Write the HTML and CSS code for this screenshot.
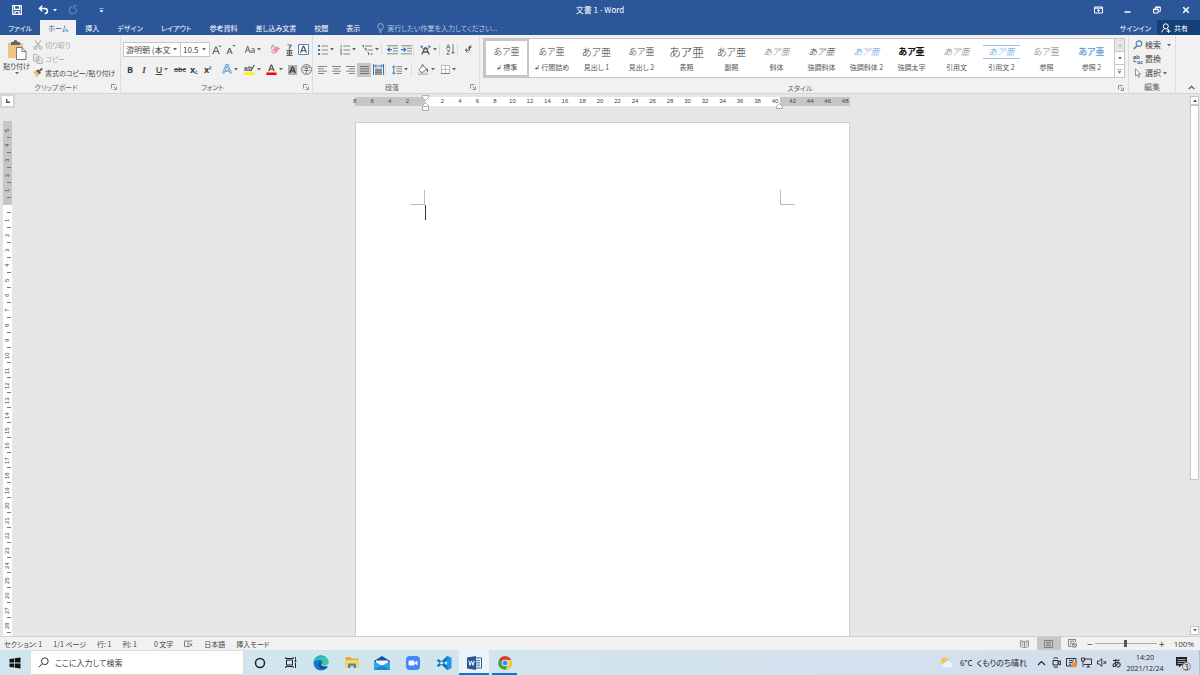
FILE: index.html
```html
<!DOCTYPE html>
<html lang="ja">
<head>
    <meta charset="UTF-8">
    <meta name="viewport" content="width=device-width, initial-scale=1.0">
    <title>文書 1 - Word</title>
    <link rel="stylesheet" href="styles.css">
</head>
<body>
    <svg class="sprite" aria-hidden="true">
        <symbol id="arrow" viewBox="0 0 4 3"><path d="M0 0h4L2 2.5z" fill="#666"/></symbol>
        <symbol id="launcher" viewBox="0 0 6 6"><path d="M.5 4.500V.5h4M2.500 2.500l2 2M5.500 2.500v3h-3" fill="none" stroke="#777" stroke-width=".8"/></symbol>
    </svg>

    <!-- タイトルバー -->
    <header class="titlebar">
        <div class="quick-access">
            <button class="qa-save" aria-label="上書き保存"><svg width="10" height="10" viewBox="0 0 10 10"><path d="M.7.7h8.600v8.600H.7zM2.500.7v3.600h5V.7M3 9.300V6.500h4v2.800" fill="none" stroke="#fff" stroke-width="1.200"/></svg></button>
            <button class="qa-undo" aria-label="元に戻す"><svg width="11" height="10" viewBox="0 0 11 10"><path d="M4.200.8L1.500 3.500l2.700 2.700M1.800 3.500h4.700c4 0 3.700 5 .3 5" fill="none" stroke="#fff" stroke-width="1.500"/></svg><svg width="4" height="3" viewBox="0 0 4 3"><path d="M0 0h4L2 2.500z" fill="#fff"/></svg></button>
            <button class="qa-redo" aria-label="繰り返し"><svg width="10" height="10" viewBox="0 0 10 10"><path d="M4 1.600a3.700 3.700 0 1 0 4 1.600M8.700.8H5.600v3.200" fill="none" stroke="#5f82b8" stroke-width="1.200"/></svg></button>
            <button class="qa-more" aria-label="カスタマイズ"><svg width="5" height="5" viewBox="0 0 5 5"><path d="M.5.500h4M1 2.500h3L2.500 4.300z" fill="#fff" stroke="#fff" stroke-width=".5"/></svg></button>
        </div>
        <h1>文書 1 - Word</h1>
        <div class="window-buttons">
            <button aria-label="リボンの表示オプション"><svg width="9" height="8" viewBox="0 0 9 8"><path d="M.5 1h8v6h-8zM.5 2.200h8" fill="none" stroke="#fff"/><path d="M4.500 3L6.300 5H5v1.200H4V5H2.700z" fill="#fff"/></svg></button>
            <button aria-label="最小化"><svg width="7" height="7" viewBox="0 0 7 7"><path d="M.5 5h6" stroke="#fff" stroke-width="1.500"/></svg></button>
            <button aria-label="元に戻す (縮小)"><svg width="8" height="8" viewBox="0 0 8 8"><path d="M.6 3h4.600v4H.6zM2.500 2.800V1h4.800v4.300H5.400M.6 3.600h4.600M2.500 1.400h4.800" fill="none" stroke="#fff"/></svg></button>
            <button aria-label="閉じる"><svg width="8" height="8" viewBox="0 0 8 8"><path d="M1.200 1.200l5.600 5.600M6.800 1.200L1.200 6.800" stroke="#fff" stroke-width="1.600"/></svg></button>
        </div>
    </header>

    <!-- リボンのタブ -->
    <nav class="tabs">
        <button class="file">ファイル</button>
        <button class="active">ホーム</button>
        <button>挿入</button>
        <button>デザイン</button>
        <button>レイアウト</button>
        <button>参考資料</button>
        <button>差し込み文書</button>
        <button>校閲</button>
        <button>表示</button>
        <label class="tell-me">
            <svg width="7" height="10" viewBox="0 0 7 10"><path d="M2.300 6.800C2.300 5.300.7 4.900.7 3.300a2.800 2.700 0 0 1 5.600 0c0 1.600-1.600 2-1.600 3.500zM2.400 8.200h2.200M2.700 9.400h1.600" fill="none" stroke="#b5c6e0" stroke-width=".8"/></svg>
            <input type="text" placeholder="実行したい作業を入力してください..." aria-label="操作アシスト">
        </label>
        <button class="signin">サインイン</button>
        <button class="share"><svg width="10" height="10" viewBox="0 0 10 10"><circle cx="4.800" cy="3.300" r="2.500" fill="none" stroke="#fff"/><path d="M.8 9.500c.3-2 1.400-3.400 3-3.800M5.800 5.700l1.200 1M5.500 8.200h4M7.500 6.200v3.600" fill="none" stroke="#fff"/></svg>共有</button>
    </nav>

    <!-- リボン -->
    <section class="ribbon">
        <div class="group group-clipboard">
            <div class="group-body">
                <button class="paste">
                    <svg width="20" height="20" viewBox="0 0 20 20"><path d="M1 3h15v15H1z" fill="#ecc681"/><path d="M4 2h2.500a2 2 0 0 1 4 0H13v3H4z" fill="#666"/><path d="M9.500 7.500h5.500l4 4v8H9.500z" fill="#fff" stroke="#777"/><path d="M15 7.500v4h4" fill="none" stroke="#777"/></svg>
                    <span>貼り付け</span>
                    <svg width="4" height="3"><use href="#arrow"/></svg>
                </button>
                <div class="line-buttons">
                    <button class="disabled" disabled><svg width="10" height="10" viewBox="0 0 10 10"><path d="M2 .5l5 6.500M8 .5L3 7" stroke="#aaa" stroke-width="1.200"/><circle cx="2.300" cy="7.800" r="1.500" fill="none" stroke="#aaa"/><circle cx="7.700" cy="7.800" r="1.500" fill="none" stroke="#aaa"/></svg>切り取り</button>
                    <button class="disabled" disabled><svg width="10" height="10" viewBox="0 0 10 10"><path d="M.5.500h3.500l1.500 1.500v5h-5zM4 3h3.500l1.800 1.800v4.700H4z" fill="#f1f1f1" stroke="#bbaebb"/><path d="M5.500 5.500h2M5.500 7.200h2.500M1.800 3h1.500M1.800 5h1.500" stroke="#bbb" stroke-width=".7"/></svg>コピー</button>
                    <button><svg width="10" height="10" viewBox="0 0 10 10"><path d="M0 4l3.500-1.500 3 3.500L4 9.500z" fill="#ecc070"/><path d="M3 2.500l2-1 3 3.500-1.500 1.300z" fill="#555"/><path d="M6.300 3L9.300.5" stroke="#555" stroke-width="1.700"/></svg>書式のコピー/貼り付け</button>
                </div>
            </div>
            <div class="group-title"><span>クリップボード</span><button aria-label="クリップボードの詳細"><svg width="6" height="6"><use href="#launcher"/></svg></button></div>
        </div>

        <div class="group group-font">
            <div class="group-body tool-rows">
                <div class="tools">
                    <label class="combo font-name"><select aria-label="フォント"><option>游明朝 (本文のフォント)</option></select><svg width="4" height="3"><use href="#arrow"/></svg></label>
                    <label class="combo font-size"><select aria-label="フォント サイズ"><option>10.5</option></select><svg width="4" height="3"><use href="#arrow"/></svg></label>
                    <button class="tool" aria-label="フォントの拡大"><svg width="10" height="11" viewBox="0 0 10 11"><path d="M.8 10L3.700 3h.6l2.900 7M2 7.500h4" fill="none" stroke="#666" stroke-width="1.100"/><path d="M6.300 2.800L8 1l1.700 1.800z" fill="#3b78b8"/></svg></button>
                    <button class="tool" aria-label="フォントの縮小"><svg width="10" height="11" viewBox="0 0 10 11"><path d="M1 10l2.300-5.500h.6L6.200 10M2 8h3.200" fill="none" stroke="#666" stroke-width="1.100"/><path d="M6.300 1L8 2.800 9.700 1z" fill="#3b78b8"/></svg></button>
                    <i class="sep"></i>
                    <button class="tool wide" aria-label="文字種の変換"><b class="plain">Aa</b><svg width="4" height="3"><use href="#arrow"/></svg></button>
                    <i class="sep"></i>
                    <button class="tool" aria-label="書式のクリア"><svg width="11" height="11" viewBox="0 0 11 11"><path d="M1 7.500L6.500 2l3.500 2.500L5.500 9.500H2.500z" fill="#e8929e"/><path d="M.8 7.200L2.600 5.300l3 3-1.200 1.400H2.300z" fill="#e9b9c0"/><path d="M1 5l1.500-4h.5l1.200 3" fill="none" stroke="#888" stroke-width=".8"/></svg></button>
                    <button class="tool" aria-label="ルビ"><svg width="9" height="12" viewBox="0 0 9 12"><path d="M2.500 1h4L4 4.500M4.800 2.500v2.300M1.500 6.500h6M4.500 5.200v6.300M2.300 8h4.400v2H2.300zM1.300 11.500h6.400" fill="none" stroke="#555" stroke-width=".9"/></svg></button>
                    <button class="tool" aria-label="囲み線"><svg width="11" height="11" viewBox="0 0 11 11"><path d="M.5.500h10v10H.5z" fill="#fff" stroke="#4f86bd"/><path d="M2.500 8.800l2.700-6.500h.6l2.700 6.500M3.600 6.700h3.800" fill="none" stroke="#444" stroke-width="1.100"/></svg></button>
                </div>
                <div class="tools">
                    <button class="tool" aria-label="太字"><b>B</b></button>
                    <button class="tool" aria-label="斜体"><em>I</em></button>
                    <button class="tool wide" aria-label="下線"><u>U</u><svg width="4" height="3"><use href="#arrow"/></svg></button>
                    <button class="tool" aria-label="取り消し線"><s>abc</s></button>
                    <button class="tool" aria-label="下付き"><b>x</b><svg width="3" height="8" viewBox="0 0 3 8"><path d="M.3 5.200c1.600-1 2.600.2 0 2.300h2.400" fill="none" stroke="#3b78b8" stroke-width=".9"/></svg></button>
                    <button class="tool" aria-label="上付き"><b>x</b><svg width="3" height="8" viewBox="0 0 3 8"><path d="M.3.700c1.600-1 2.600.2 0 2.300h2.400" fill="none" stroke="#3b78b8" stroke-width=".9"/></svg></button>
                    <i class="sep"></i>
                    <button class="tool wide" aria-label="文字の効果"><svg width="10" height="11" viewBox="0 0 10 11"><path d="M1 9.500L4.600 1h.8L9 9.500M2.800 7h4.400" fill="none" stroke="#5b93cc" stroke-width="2.200"/><path d="M1 9.500L4.600 1h.8L9 9.500M2.800 7h4.400" fill="none" stroke="#dceaf8" stroke-width=".8"/></svg><svg width="4" height="3"><use href="#arrow"/></svg></button>
                    <button class="tool wide" aria-label="蛍光ペン"><svg width="11" height="11" viewBox="0 0 11 11"><path d="M.3 8.300h10.200V11H.3z" fill="#ffee00"/><text x="0" y="7" font-size="7" font-weight="bold" font-family="Liberation Sans, sans-serif" fill="#555">ab</text><path d="M6.500 7L10.300 1" stroke="#555" stroke-width="1.200"/></svg><svg width="4" height="3"><use href="#arrow"/></svg></button>
                    <button class="tool wide" aria-label="フォントの色"><svg width="11" height="11" viewBox="0 0 11 11"><path d="M.3 8.500h10.200V11H.3z" fill="#f00"/><path d="M2.700 7.300L5.100 1h.6l2.400 6.300M3.700 5.200h3.400" fill="none" stroke="#555" stroke-width="1.200"/></svg><svg width="4" height="3"><use href="#arrow"/></svg></button>
                    <button class="tool" aria-label="文字の網かけ"><svg width="9" height="10" viewBox="0 0 9 10"><path d="M0 0h9v10H0z" fill="#b0b0b0"/><path d="M1.600 8l2.600-6h.6l2.600 6M2.600 6h3.800" fill="none" stroke="#333" stroke-width="1.200"/></svg></button>
                    <button class="tool" aria-label="囲い文字"><svg width="11" height="11" viewBox="0 0 11 11"><circle cx="5.500" cy="5.500" r="4.900" fill="none" stroke="#666" stroke-width=".9"/><path d="M5.500 1.800v1M2.800 4V3h5.400v1M3.800 4.500h3.200L5.500 5.700V9H4.500M2.500 6.500h6" fill="none" stroke="#666" stroke-width=".8"/></svg></button>
                </div>
            </div>
            <div class="group-title"><span>フォント</span><button aria-label="フォントの詳細"><svg width="6" height="6"><use href="#launcher"/></svg></button></div>
        </div>

        <div class="group group-paragraph">
            <div class="group-body tool-rows">
                <div class="tools">
                    <button class="tool wide" aria-label="箇条書き"><svg width="10" height="10" viewBox="0 0 10 10"><path d="M0 0h2v2H0zM0 4h2v2H0zM0 8h2v2H0z" fill="#3b78b8"/><path d="M3.500 1H10M3.500 5H10M3.500 9H10" stroke="#888"/></svg><svg width="4" height="3"><use href="#arrow"/></svg></button>
                    <button class="tool wide" aria-label="段落番号"><svg width="10" height="10" viewBox="0 0 10 10"><path d="M1.200 0v2.500M.3 4.200h1.400L.4 6h1.400M.3 7.500h1.300v2.200H.3" fill="none" stroke="#3b78b8" stroke-width=".9"/><path d="M3.500 1H10M3.500 5H10M3.500 9H10" stroke="#888"/></svg><svg width="4" height="3"><use href="#arrow"/></svg></button>
                    <button class="tool wide" aria-label="アウトライン"><svg width="11" height="10" viewBox="0 0 11 10"><path d="M0 .5h1.500v2M2.500 3.500H4v2.500M5.500 7.500h1V10" fill="none" stroke="#3b78b8"/><path d="M3 1h7M5.500 5H11M8 9h3" stroke="#888"/></svg><svg width="4" height="3"><use href="#arrow"/></svg></button>
                    <i class="sep line"></i>
                    <button class="tool" aria-label="インデントを減らす"><svg width="11" height="10" viewBox="0 0 11 10"><path d="M0 .8h11M6 3.300h5M6 6h5M0 8.800h11" stroke="#888"/><path d="M5 4.600H1M2.800 2.700L.8 4.600l2 2" fill="none" stroke="#2f72b5" stroke-width="1.200"/></svg></button>
                    <button class="tool" aria-label="インデントを増やす"><svg width="11" height="10" viewBox="0 0 11 10"><path d="M0 .8h11M6 3.300h5M6 6h5M0 8.800h11" stroke="#888"/><path d="M0 4.600h4.500M2.700 2.700l2 1.900-2 2" fill="none" stroke="#2f72b5" stroke-width="1.200"/></svg></button>
                    <i class="sep line"></i>
                    <button class="tool wide" aria-label="拡張書式"><svg width="11" height="10" viewBox="0 0 11 10"><path d="M1.800 9.500l3-6.500h1.400l3 6.500M3 7h5" fill="none" stroke="#555" stroke-width="1.300"/><path d="M2 2.500l2 2M9 2.500l-2 2" stroke="#555"/><path d="M0 .8h3.200L1.500 3.300zM11 .8H7.800l1.700 2.500z" fill="#3b78b8"/></svg><svg width="4" height="3"><use href="#arrow"/></svg></button>
                    <i class="sep line"></i>
                    <button class="tool" aria-label="並べ替え"><svg width="9" height="11" viewBox="0 0 9 11"><path d="M.5 4.800L2.300.5l1.800 4.300M1 3.300h2.600" fill="none" stroke="#3b78b8" stroke-width=".9"/><path d="M.8 6.300h3L.8 10.200h3.200" fill="none" stroke="#87549b" stroke-width=".9"/><path d="M7 0v9.500M5.300 7.800L7 9.700l1.700-1.900" fill="none" stroke="#666" stroke-width=".9"/></svg></button>
                    <i class="sep line"></i>
                    <button class="tool" aria-label="編集記号の表示"><svg width="8" height="9" viewBox="0 0 8 9"><path d="M5.500.5v4.700H1.500M3 3.500L1.300 5.200 3 7M7 .5v2.300H4M3.500 7.500h1" fill="none" stroke="#555"/></svg></button>
                </div>
                <div class="tools">
                    <button class="tool" aria-label="左揃え"><svg width="9" height="8" viewBox="0 0 9 8"><path d="M0 .5h9M0 2.800h6M0 5.200h9M0 7.500h6" stroke="#777" stroke-width=".9"/></svg></button>
                    <button class="tool" aria-label="中央揃え"><svg width="9" height="8" viewBox="0 0 9 8"><path d="M0 .5h9M1.500 2.800h6M0 5.200h9M1.500 7.500h6" stroke="#777" stroke-width=".9"/></svg></button>
                    <button class="tool" aria-label="右揃え"><svg width="9" height="8" viewBox="0 0 9 8"><path d="M0 .5h9M3 2.800h6M0 5.200h9M3 7.500h6" stroke="#777" stroke-width=".9"/></svg></button>
                    <button class="tool pressed" aria-label="両端揃え"><svg width="9" height="8" viewBox="0 0 9 8"><path d="M0 .5h9M0 2.800h9M0 5.200h9M0 7.500h9" stroke="#666" stroke-width=".9"/></svg></button>
                    <button class="tool" aria-label="均等割り付け"><svg width="11" height="11" viewBox="0 0 11 11"><path d="M.5 0v11M10.500 0v11" stroke="#3b78b8"/><path d="M1.500 2h8M3 .5L1.500 2 3 3.500M8 .5L9.500 2 8 3.500" fill="none" stroke="#3b78b8"/><path d="M2 4.500h7V11H2z" fill="#999"/><path d="M2 6.500h7M2 8.500h7" stroke="#777" stroke-width=".7"/></svg></button>
                    <i class="sep line"></i>
                    <button class="tool wide" aria-label="行間"><svg width="10" height="10" viewBox="0 0 10 10"><path d="M1.800 1v8M.3 2.500L1.800.8l1.500 1.700M.3 7.500l1.500 1.700 1.500-1.700" fill="none" stroke="#3b78b8"/><path d="M4.500 1.500H10M4.500 3.800H10M4.500 6.200H10M4.500 8.500H10" stroke="#888"/></svg><svg width="4" height="3"><use href="#arrow"/></svg></button>
                    <i class="sep line"></i>
                    <button class="tool wide" aria-label="塗りつぶし"><svg width="11" height="11" viewBox="0 0 11 11"><path d="M1 5.500L5 1.500l3.500 3.300L5 8.300H3z" fill="#fff" stroke="#666" stroke-width=".9"/><path d="M4 3.500V.8h1.500" fill="none" stroke="#666" stroke-width=".8"/><path d="M8 4.300c2 0 2.500 2 2 4.200L8.500 7z" fill="#3b78b8"/><path d="M.5 9.200h9v1.300h-9z" fill="#fff" stroke="#999" stroke-width=".6"/></svg><svg width="4" height="3"><use href="#arrow"/></svg></button>
                    <button class="tool wide" aria-label="罫線"><svg width="9" height="9" viewBox="0 0 9 9"><path d="M.5.500h8v8h-8zM4.500.5v8M.5 4.500h8" fill="#fff" stroke="#bbb"/><path d="M0 8.500h9" stroke="#777"/></svg><svg width="4" height="3"><use href="#arrow"/></svg></button>
                </div>
            </div>
            <div class="group-title"><span>段落</span><button aria-label="段落の詳細"><svg width="6" height="6"><use href="#launcher"/></svg></button></div>
        </div>

        <div class="group group-styles">
            <div class="group-body gallery">
                <button class="style selected"><span class="sample">あア亜</span><span>↲ 標準</span></button>
                <button class="style"><span class="sample">あア亜</span><span>↲ 行間詰め</span></button>
                <button class="style"><span class="sample heading">あア亜</span><span>見出し 1</span></button>
                <button class="style"><span class="sample">あア亜</span><span>見出し 2</span></button>
                <button class="style"><span class="sample title">あア亜</span><span>表題</span></button>
                <button class="style"><span class="sample heading">あア亜</span><span>副題</span></button>
                <button class="style"><span class="sample italic gray">あア亜</span><span>斜体</span></button>
                <button class="style"><span class="sample italic">あア亜</span><span>強調斜体</span></button>
                <button class="style"><span class="sample italic blue">あア亜</span><span>強調斜体 2</span></button>
                <button class="style"><span class="sample strong">あア亜</span><span>強調太字</span></button>
                <button class="style"><span class="sample italic gray">あア亜</span><span>引用文</span></button>
                <button class="style"><span class="sample italic blue ruled">あア亜</span><span>引用文 2</span></button>
                <button class="style"><span class="sample gray">あア亜</span><span>参照</span></button>
                <button class="style"><span class="sample blue bold">あア亜</span><span>参照 2</span></button>
                <div class="gallery-scroll">
                    <button class="off" aria-label="前の行"><svg width="4" height="3" viewBox="0 0 4 3"><path d="M0 2.500h4L2 0z" fill="#bbb"/></svg></button>
                    <button aria-label="次の行"><svg width="4" height="3"><use href="#arrow"/></svg></button>
                    <button aria-label="その他"><svg width="5" height="5" viewBox="0 0 5 5"><path d="M0 .5h5M1 2.500h3L2.500 4.300z" fill="#666" stroke="#666" stroke-width=".5"/></svg></button>
                </div>
            </div>
            <div class="group-title"><span>スタイル</span><button aria-label="スタイルの詳細"><svg width="6" height="6"><use href="#launcher"/></svg></button></div>
        </div>

        <div class="group group-edit">
            <div class="group-body line-buttons">
                <button><svg width="10" height="10" viewBox="0 0 10 10"><circle cx="6" cy="3.600" r="2.800" fill="none" stroke="#4a7fb5" stroke-width="1.200"/><path d="M4 5.800L.8 9" stroke="#4a7fb5" stroke-width="1.600"/></svg>検索<svg class="far" width="4" height="3"><use href="#arrow"/></svg></button>
                <button><svg width="10" height="10" viewBox="0 0 10 10"><text x="0" y="4.500" font-size="6" font-weight="bold" font-family="Liberation Sans, sans-serif" fill="#555">ab</text><text x="4" y="9.500" font-size="6" font-weight="bold" font-family="Liberation Sans, sans-serif" fill="#3b78b8">ac</text><path d="M1 5.500v2.300h2.500" fill="none" stroke="#87549b"/></svg>置換</button>
                <button><svg width="10" height="10" viewBox="0 0 10 10"><path d="M2.500.8v7.200L4.300 6.500l1.200 2.800 1-.4L5.400 6.200h2.300z" fill="#fff" stroke="#777" stroke-width=".8"/></svg>選択<svg width="4" height="3"><use href="#arrow"/></svg></button>
            </div>
            <div class="group-title"><span>編集</span></div>
        </div>

        <button class="collapse" aria-label="リボンを折りたたむ"><svg width="7" height="5" viewBox="0 0 7 5"><path d="M.7 4.200l2.800-2.800 2.800 2.800" fill="none" stroke="#555" stroke-width="1.200"/></svg></button>
    </section>

    <!-- 編集領域 -->
    <main class="workspace">
        <div class="left-side">
            <button class="tab-stop" aria-label="左揃えタブ"><svg width="4" height="4" viewBox="0 0 4 4"><path d="M.7 0v3.300H4" fill="none" stroke="#555" stroke-width="1.400"/></svg></button>
            <div class="v-ruler">
                <div class="v-margin" id="v-margin"></div>
                <div class="v-text" id="v-text"></div>
            </div>
        </div>
        <div class="canvas">
            <div class="h-ruler">
                <div class="h-numbers" id="h-numbers"></div>
                <svg class="indent-left" width="7" height="16" viewBox="0 0 7 16"><path d="M.5.500h6v2l-3 3-3-3zM.5 10.500l3-3 3 3v4.900h-6zM.5 11.500h6" fill="#fff" stroke="#999" stroke-width=".8"/></svg>
                <svg class="indent-right" width="7" height="6" viewBox="0 0 7 6"><path d="M.5 5.500v-2l3-3 3 3v2z" fill="#fff" stroke="#999" stroke-width=".8"/></svg>
            </div>
            <article class="sheet">
                <div class="crop-marks"><i class="mark-left"></i><i class="mark-right"></i></div>
                <div class="caret"></div>
            </article>
        </div>
        <div class="scrollbar">
            <button aria-label="上へ"><svg width="4" height="3" viewBox="0 0 4 3"><path d="M0 3h4L2 .5z" fill="#555"/></svg></button>
            <div class="track"><div class="thumb"></div></div>
            <button aria-label="下へ"><svg width="4" height="3"><use href="#arrow"/></svg></button>
        </div>
    </main>

    <!-- ステータスバー -->
    <div class="statusbar">
        <span>セクション: 1</span>
        <span>1/1 ページ</span>
        <span>行: 1</span>
        <span>列: 1</span>
        <span class="chars">0 文字</span>
        <svg width="9" height="8" viewBox="0 0 9 8"><path d="M4 1.500C3 .8 1.500.8.5 1v5.500c1-.2 2.500-.2 3.500.5zM4 1.500C5 .8 6 .8 8 1M4 7c1-.7 1.500-.6 2-.6M5.500 3l2.800 3.500M8.300 3L5.500 6.500" fill="none" stroke="#666" stroke-width=".8"/></svg>
        <span>日本語</span>
        <span>挿入モード</span>
        <div class="views">
            <button aria-label="閲覧モード"><svg width="9" height="8" viewBox="0 0 9 8"><path d="M4.500 1.500L.5.700v6l4 .8 4-.8v-6zM4.500 1.500v6M1.500 2.500l2 .3M1.500 4.500l2 .3M5.500 2.800l2-.3M5.500 4.800l2-.3" fill="none" stroke="#777" stroke-width=".8"/></svg></button>
            <button class="active" aria-label="印刷レイアウト"><svg width="9" height="8" viewBox="0 0 9 8"><path d="M.5.500h8v7h-8zM2 2.200h5M2 4h5M2 5.800h5" fill="none" stroke="#777" stroke-width=".9"/></svg></button>
            <button aria-label="Web レイアウト"><svg width="9" height="9" viewBox="0 0 9 9"><path d="M3.500 7.500h-3v-7h7v2.500M2 2.200h4M2 4h2M2 5.800h1" fill="none" stroke="#777" stroke-width=".9"/><circle cx="6.300" cy="6.200" r="2.200" fill="#ddd" stroke="#666" stroke-width=".8"/><path d="M5 5l2.700 2.500" stroke="#666" stroke-width=".8"/></svg></button>
        </div>
        <div class="zoom">
            <button aria-label="縮小">−</button>
            <input type="range" min="0" max="100" value="50" aria-label="ズーム">
            <button aria-label="拡大">+</button>
            <output>100%</output>
        </div>
    </div>

    <!-- タスクバー -->
    <footer class="taskbar">
        <button class="start" aria-label="スタート"><svg width="12" height="12" viewBox="0 0 12 12"><path d="M.5 2L5 1.400v4.200H.5zM5.700 1.300L11.500.5v5.100H5.700zM.5 6.400H5v4.200L.5 10zM5.700 6.400h5.800v5.100l-5.800-.8z" fill="#111"/></svg></button>
        <label class="search">
            <svg width="11" height="11" viewBox="0 0 11 11"><circle cx="6.800" cy="4.200" r="3.400" fill="none" stroke="#333"/><path d="M4.300 6.700L.7 10.300" stroke="#333"/></svg>
            <input type="text" placeholder="ここに入力して検索" aria-label="検索">
        </label>
        <button class="shell-button" aria-label="Cortana"><svg width="12" height="12" viewBox="0 0 12 12"><circle cx="6" cy="6" r="4.500" fill="none" stroke="#222" stroke-width="1.500"/></svg></button>
        <button class="shell-button" aria-label="タスク ビュー"><svg width="12" height="11" viewBox="0 0 12 11"><path d="M1.500 3h6v5h-6zM.8 0v1.500h7.400V0M.8 11V9.500h7.400V11M10.500 0v2.500M10.500 5.500V11" fill="none" stroke="#222"/><path d="M9.800 3h1.500v1.800H9.800z" fill="#222"/></svg></button>
        <div class="apps">
            <button aria-label="Edge"><svg width="16" height="16" viewBox="0 0 16 16"><circle cx="8" cy="8" r="7.500" fill="#1576cf"/><path d="M.6 7.500C1 3.200 4.500.5 8 .5c4.500 0 7.500 3 7.500 6.200 0 2.300-1.800 3.700-4 3.700-1.800 0-2.500-.7-2.200-1.300C10.500 6.500 8.500 4.700 6 4.700c-2.400 0-4.500 1-5.400 2.800z" fill="#3dc6a4"/><path d="M.6 7.500C1 3.200 4.500.5 8 .5c2 0 3.500.6 4.600 1.600C8 1.500 2.500 3 .6 7.500z" fill="#29a8dc"/><path d="M5.700 8c-1 3 1.500 6.500 6.500 6.100 1.400-.7 2.200-1.600 2.500-2.400-3 1.500-7 .3-6.200-3.200C8.500 6.500 6.500 6 5.700 8z" fill="#0d4f98"/><path d="M8.500 8c-.9 2.500 1.500 4 5 3 .7-.2 1.300 0 1.200.7 1.200-2 1-3.500.6-4-.5 2-2 2.900-4 2.700-1.800 0-2.500-.7-2.200-1.300z" fill="#d2e6ef"/></svg></button>
            <button aria-label="エクスプローラー"><svg width="14" height="13" viewBox="0 0 14 13"><path d="M.5 1h5l1 1.500h7V12H.5z" fill="#e8a92e"/><path d="M.5 4h13v8H.5z" fill="#fcd462"/><path d="M3 12V7.500h8V12H8.800V9.800H5.200V12z" fill="#3c87c8"/></svg></button>
            <button aria-label="メール"><svg width="16" height="14" viewBox="0 0 16 14"><path d="M0 5l8-5 8 5v9H0z" fill="#0c59a4"/><path d="M2 4.500h12V10H2z" fill="#f2f6fa"/><path d="M0 5l8 5 8-5v9H0z" fill="#28a8e8"/><path d="M0 14l8-5 8 5z" fill="#1b88d4"/></svg></button>
            <button aria-label="Zoom"><svg width="14" height="14" viewBox="0 0 14 14"><rect width="14" height="14" rx="4" fill="#4087fc"/><rect x="2.500" y="4.500" width="6" height="5" rx="1.200" fill="#fff"/><path d="M9 6.300l2.500-1.800v5L9 7.700z" fill="#fff"/></svg></button>
            <button aria-label="Visual Studio Code"><svg width="16" height="16" viewBox="0 0 16 16"><path d="M11 .7l4.500 2v10.600l-4.500 2z" fill="#2298e0"/><path d="M11.500.7v4.800L2.300 12 .7 10.600zM11.500 15.300v-4.800L2.300 4 .7 5.400z" fill="#087bc0"/></svg></button>
            <button class="current" aria-label="Word"><svg width="15" height="14" viewBox="0 0 15 14"><path d="M7 2h7.500v10H7z" fill="#fff" stroke="#2b579a"/><path d="M9 4.500h4M9 6.300h4M9 8h4M9 9.800h4" stroke="#2b579a" stroke-width=".8"/><path d="M0 1.500L9 0v14l-9-1.500z" fill="#2b579a"/><path d="M1.800 4.700l1.200 4.700 1.500-4.500L6 9.400l1.300-4.900" fill="none" stroke="#fff"/></svg></button>
            <button class="running" aria-label="Chrome"><svg width="14" height="14" viewBox="0 0 14 14"><circle cx="7" cy="7" r="6.800" fill="#31a450"/><path d="M7 7L1.100 3.600A6.800 6.800 0 0 1 12.900 3.600z" fill="#e33b2e"/><path d="M7 4h6a6.800 6.800 0 0 1-5.500 9.800L10 8z" fill="#fccd32"/><circle cx="7" cy="7" r="3.300" fill="#fff"/><circle cx="7" cy="7" r="2.500" fill="#4285f4"/></svg></button>
        </div>
        <div class="tray">
            <button class="weather"><svg width="14" height="12" viewBox="0 0 14 12"><circle cx="5" cy="4.500" r="4" fill="#f6c649"/><path d="M4.500 11a2.500 2.500 0 0 1 0-5 3.800 3.800 0 0 1 7-.2A2.700 2.700 0 0 1 11 11z" fill="#e9f3fb" stroke="#bcd5ea" stroke-width=".5"/></svg>6°C&ensp;くもりのち晴れ</button>
            <button class="tray-icon" aria-label="隠れているインジケーター"><svg width="9" height="6" viewBox="0 0 9 6"><path d="M1 5l3.500-3.500L8 5" fill="none" stroke="#222" stroke-width="1.100"/></svg></button>
            <button class="tray-icon" aria-label="Meet Now"><svg width="9" height="11" viewBox="0 0 9 11"><path d="M1 3.500h5v4.500H1zM6 5l2.300-1.300v4.200L6 6.500M1.500 1.500c1.500-1 3-1 4.500 0M1.500 9.700c1.500.8 3 .8 4.500 0" fill="none" stroke="#222"/></svg></button>
            <button class="tray-icon" aria-label="更新"><svg width="11" height="11" viewBox="0 0 11 11"><path d="M.5 1.500h9.500V9H.5zM3 3.500h3M3 5.500h3M3 7.200h2M7.500 2.500l-1 3" fill="none" stroke="#222" stroke-width=".9"/><circle cx="8.200" cy="8" r="2.500" fill="#f7941d"/></svg></button>
            <button class="tray-icon" aria-label="ネットワーク"><svg width="11" height="11" viewBox="0 0 11 11"><path d="M3 2h7.500v5.500H3M.5 1h3v3h-3zM2 4v6M5.500 10H9M7.200 7.500V10" fill="none" stroke="#222" stroke-width=".9"/></svg></button>
            <button class="tray-icon" aria-label="ミュート"><svg width="10" height="9" viewBox="0 0 10 9"><path d="M.5 3h1.700L4.800.7v7.600L2.200 6H.5zM6.500 3l2.700 3M9.200 3L6.500 6" fill="none" stroke="#222" stroke-width=".9"/></svg></button>
            <button class="tray-icon ime">あ</button>
            <button class="clock"><time>14:20</time><time>2021/12/24</time></button>
            <button class="notice" aria-label="通知"><svg width="16" height="16" viewBox="0 0 16 16"><path d="M1 2h11v8.500H6L4 12.500v-2H1z" fill="#222"/><path d="M2.500 4.500h8M2.500 6.500h8M2.500 8.500h5" stroke="#d3dfee" stroke-width=".7"/></svg><span>3</span></button>
        </div>
    </footer>

    <script>
        // ルーラーの目盛りを作る
        function fillRuler(id, numbers) {
            document.getElementById(id).innerHTML = numbers.map(n => `<span>${n}</span>`).join('');
        }

        // 横は2文字ごと、0 の位置は空白
        const columns = [];
        for (let i = -8; i <= 48; i += 2) {
            columns.push(i === 0 ? '' : Math.abs(i));
        }

        fillRuler('h-numbers', columns);
        fillRuler('v-margin', [5, 4, 3, 2, 1]);
        fillRuler('v-text', Array.from({ length: 28 }, (_, i) => i + 1));
    </script>
</body>
</html>
```
FILE: styles.css
```css
/* 共通 */
* {
    box-sizing: border-box;
}

body {
    margin: 0;
    height: 100vh;
    display: flex;
    flex-direction: column;
    overflow: hidden;
    font-family: 'Noto Sans CJK JP', sans-serif;
    font-size: 7px;
    line-height: 12px;
    font-feature-settings: "palt";
    color: #444;
    background: #e6e6e6;
}

button,
input,
select {
    font: inherit;
    font-feature-settings: inherit;
    color: inherit;
    background: none;
    border: none;
    padding: 0;
    margin: 0;
    outline: none;
}

button {
    display: flex;
    align-items: center;
    justify-content: center;
    white-space: nowrap;
}

svg {
    flex: none;
    display: block;
}

.sprite {
    display: none;
}

/* タイトルバー */
.titlebar {
    display: grid;
    grid-template-columns: 1fr auto 1fr;
    align-items: center;
    flex: none;
    height: 20px;
    background: #2b579a;
    color: #fff;
}

.titlebar h1 {
    margin: 0;
    font-size: 8px;
    font-weight: 400;
}

.quick-access {
    display: flex;
    align-items: center;
    padding-left: 12px;
}

.qa-undo {
    gap: 4px;
    margin-left: 16px;
}

.qa-redo {
    margin-left: 11px;
}

.qa-more {
    margin-left: 21px;
}

.window-buttons {
    display: flex;
    justify-content: flex-end;
}

.window-buttons button {
    width: 29px;
    height: 20px;
}

/* タブ */
.tabs {
    display: flex;
    flex: none;
    height: 15px;
    background: #2b579a;
    color: #fff;
}

.tabs button {
    padding: 0 9px;
}

.tabs .file {
    padding: 0 8px;
}

.tabs .active {
    padding: 0 8px;
    background: #f1f1f1;
    color: #2b579a;
}

.tell-me {
    display: flex;
    align-items: center;
    flex: 1;
    gap: 3px;
    margin-left: 8px;
}

.tell-me input {
    width: 160px;
}

.tell-me input::placeholder {
    color: #b5c6e0;
    opacity: 1;
}

.tabs .signin {
    padding: 0 6px;
}

.tabs .share {
    width: 43px;
    gap: 3px;
    padding: 0 8px 0 0;
    background: #124078;
}

/* リボン */
.ribbon {
    display: flex;
    flex: none;
    height: 59px;
    background: #f1f1f1;
    border-bottom: 1px solid #d5d5d5;
}

.group {
    display: flex;
    flex-direction: column;
    padding: 3px 2px 0;
    border-right: 1px solid #dcdcdc;
}

.group-body {
    flex: 1;
    display: flex;
}

.group-title {
    display: flex;
    align-items: center;
    height: 12px;
    color: #666;
}

.group-title span {
    flex: 1;
    text-align: center;
}

.group-title button {
    width: 8px;
}

.group-clipboard {
    width: 121px;
}

.paste {
    flex-direction: column;
    justify-content: flex-start;
    width: 29px;
    padding-top: 2px;
    gap: 1px;
}

.paste span {
    line-height: 10px;
}

.line-buttons {
    display: flex;
    flex-direction: column;
    padding: 0 2px;
}

.line-buttons button {
    height: 14px;
    gap: 2px;
    justify-content: flex-start;
}

.line-buttons .disabled {
    color: #aaa;
}

.line-buttons .far {
    margin-left: 4px;
}

.tool-rows {
    flex-direction: column;
    gap: 5px;
    padding-top: 4px;
}

.tools {
    display: flex;
    align-items: center;
    height: 15px;
}

.tool {
    width: 14px;
    height: 14px;
    flex: none;
    font-family: 'Open Sans', sans-serif;
    font-size: 9px;
}

.tool.wide {
    width: 22px;
    gap: 2px;
}

.tool.pressed {
    background: #c5c5c5;
}

.tool em {
    font-family: 'Liberation Serif', serif;
    font-weight: 700;
}

.tool u {
    font-weight: 600;
}

.tool s {
    font-size: 7px;
    font-weight: 600;
}

.tool .plain {
    font-weight: 400;
}

.sep {
    width: 4px;
    height: 14px;
    flex: none;
}

.sep.line {
    border-left: 1px solid #dcdcdc;
}

.group-font {
    width: 192px;
}

.combo {
    display: flex;
    align-items: center;
    height: 15px;
    padding: 0 3px 0 2px;
    gap: 2px;
    font-size: 8px;
    background: #fff;
    border: 1px solid #c6c6c6;
    flex: none;
}

.combo select {
    appearance: none;
    flex: 1;
    min-width: 0;
    overflow: hidden;
    text-overflow: clip;
}

.font-name {
    width: 58px;
}

.font-size {
    width: 29px;
    border-left: none;
}

.group-paragraph {
    width: 167px;
}

.group-styles {
    flex: 1;
    min-width: 0;
    padding: 3px 3px 0;
}

.gallery {
    flex: none;
    height: 40px;
    margin-bottom: 4px;
    background: #fff;
    border: 1px solid #c6c6c6;
}

.style {
    flex: 1;
    min-width: 0;
    flex-direction: column;
    overflow: hidden;
    line-height: 13px;
    border: 2px solid transparent;
    color: #555;
}

.style.selected {
    border-color: #c6c6c6;
}

.sample {
    display: flex;
    align-items: center;
    height: 18px;
    font-size: 9px;
    font-weight: 300;
    color: #333;
}

.sample.heading {
    font-size: 10px;
}

.sample.title {
    font-size: 12px;
}

.sample.italic {
    font-style: italic;
}

.sample.gray {
    color: #777;
}

.sample.blue {
    color: #5b9bd5;
}

.sample.bold {
    font-weight: 500;
}

.sample.strong {
    font-weight: 700;
    color: #111;
}

.sample.ruled {
    height: 14px;
    margin: 2px 0;
    padding: 0 5px;
    border: solid #9dc3e6;
    border-width: 1px 0;
}

.gallery-scroll {
    display: flex;
    flex-direction: column;
    width: 10px;
    flex: none;
    border-left: 1px solid #c6c6c6;
}

.gallery-scroll button {
    flex: 1;
}

.gallery-scroll button + button {
    border-top: 1px solid #c6c6c6;
}

.gallery-scroll .off {
    background: #e6e6e6;
}

.group-edit {
    width: 47px;
    font-size: 8px;
}

.collapse {
    width: 24px;
    align-self: flex-end;
    height: 12px;
    padding-left: 6px;
}

/* 編集領域 */
.workspace {
    display: flex;
    flex: 1;
    min-height: 0;
}

.left-side {
    width: 15px;
    display: flex;
    flex-direction: column;
}

.tab-stop {
    width: 15px;
    height: 14px;
    margin-bottom: 13px;
    flex: none;
    background: #fff;
    border: 2px solid #d5d5d5;
}

.v-ruler {
    flex: 1;
    min-height: 0;
    width: 9px;
    margin-left: 3px;
    overflow: hidden;
    font-family: 'Liberation Sans', sans-serif;
    font-size: 6px;
    line-height: 9px;
    background: #fff;
}

.v-margin {
    padding: 2px 0 7px;
    background: #c6c6c6;
}

.v-text {
    padding-top: 7px;
}

.v-text::before {
    content: "";
    display: block;
    width: 4px;
    height: 1px;
    margin-left: 4px;
    background: #777;
}

.v-ruler span {
    display: flex;
    align-items: center;
    justify-content: center;
    width: 9px;
    height: 15px;
    writing-mode: vertical-rl;
    transform: rotate(180deg);
    background: linear-gradient(#777, #777) 1px 0 / 4px 1px no-repeat;
}

.canvas {
    flex: 1;
    min-width: 0;
    display: flex;
    flex-direction: column;
    align-items: center;
    padding-top: 3px;
    overflow: hidden;
}

.h-ruler {
    position: relative;
    flex: none;
    width: 495px;
    height: 9px;
    margin-bottom: 16px;
    background: linear-gradient(to right, #c6c6c6 70px, #fff 70px, #fff 425px, #c6c6c6 425px);
}

.h-numbers {
    display: flex;
    width: 508px;
    margin-left: -9px;
    font-family: 'Liberation Sans', sans-serif;
    font-size: 6px;
    line-height: 9px;
}

.h-numbers span {
    flex: 1;
    text-align: center;
}

.indent-left {
    position: absolute;
    left: 67px;
    top: -2px;
}

.indent-right {
    position: absolute;
    left: 421px;
    top: 6px;
}

.sheet {
    flex: 1;
    width: 495px;
    padding: 67px 54px 0;
    background: #fff;
    border: 1px solid #cfcfcf;
    border-bottom: none;
}

.crop-marks {
    display: flex;
    justify-content: space-between;
}

.crop-marks i {
    width: 15px;
    height: 15px;
    border-bottom: 1px solid #bbb;
}

.crop-marks .mark-left {
    border-right: 1px solid #bbb;
}

.crop-marks .mark-right {
    border-left: 1px solid #bbb;
}

.caret {
    width: 1px;
    height: 15px;
    margin-left: 15px;
    background: #333;
}

.scrollbar {
    display: flex;
    flex-direction: column;
    width: 10px;
    padding: 2px 1px 1px 0;
    background: #e6e6e6;
}

.scrollbar button {
    height: 9px;
    background: #fff;
    border: 1px solid #c6c6c6;
}

.track {
    flex: 1;
}

.thumb {
    height: 72%;
    background: #fff;
    border: 1px solid #c6c6c6;
}

/* ステータスバー */
.statusbar {
    display: flex;
    align-items: center;
    flex: none;
    height: 14px;
    padding: 0 6px 0 4px;
    gap: 11px;
    background: #f1f1f1;
    border-top: 1px solid #d0d0d0;
}

.statusbar .chars {
    margin-left: 6px;
}

.views {
    display: flex;
    align-self: stretch;
    margin-left: auto;
}

.views button {
    width: 24px;
}

.views .active {
    background: #c6c6c6;
}

.zoom {
    display: flex;
    align-items: center;
    gap: 2px;
    margin-left: -9px;
}

.zoom button {
    width: 6px;
    font-size: 10px;
}

.zoom output {
    margin-left: 7px;
    font-family: 'Open Sans', sans-serif;
    font-size: 8px;
}

.zoom input {
    appearance: none;
    width: 62px;
    height: 8px;
    background: linear-gradient(#aaa, #aaa) center / 100% 1px no-repeat;
}

.zoom input::-webkit-slider-thumb {
    appearance: none;
    width: 3px;
    height: 7px;
    background: #555;
}

/* タスクバー */
.taskbar {
    display: flex;
    flex: none;
    height: 25px;
    font-size: 8px;
    color: #222;
    background: linear-gradient(to right, #cfe6ee, #d3e4ee 50%, #d3dded);
}

.start {
    width: 30px;
}

.search {
    display: flex;
    align-items: center;
    width: 214px;
    gap: 6px;
    padding-left: 7px;
    background: #fff;
    border: 1px solid #ddd;
}

.search input {
    flex: 1;
    min-width: 0;
}

.search input::placeholder {
    color: #444;
    opacity: 1;
}

.shell-button {
    width: 31px;
}

.apps {
    display: flex;
    width: 214px;
}

.apps button {
    flex: 1;
    min-width: 0;
}

.apps .current {
    background: linear-gradient(#0078d7, #0078d7) bottom / 100% 2px no-repeat #ecf4f9;
}

.apps .running {
    background: linear-gradient(#0078d7, #0078d7) bottom / 25px 2px no-repeat;
}

.tray {
    display: flex;
    margin-left: auto;
}

.weather {
    gap: 6px;
    margin-right: 7px;
}

.tray-icon {
    width: 15px;
}

.ime {
    font-size: 10px;
    font-weight: 500;
}

.clock {
    flex-direction: column;
    width: 42px;
    font-family: 'Open Sans', sans-serif;
    font-size: 7px;
    line-height: 11px;
}

.notice {
    position: relative;
    width: 34px;
    border-right: 1px solid #b4bdca;
}

.notice span {
    position: absolute;
    left: 16px;
    top: 12px;
    width: 9px;
    height: 9px;
    font-size: 7px;
    line-height: 8px;
    background: #ddd;
    border: 1px solid #888;
    border-radius: 50%;
}
```
